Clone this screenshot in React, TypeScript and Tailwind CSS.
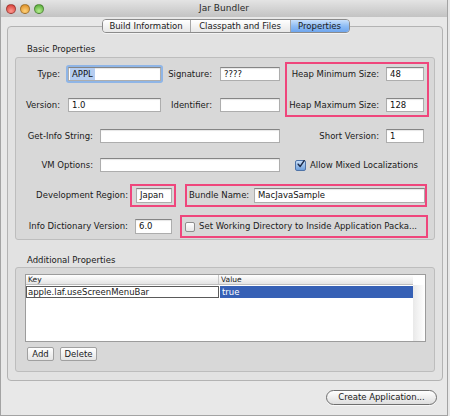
import { type ReactNode } from "react";

const fieldBase =
  "flex h-[14px] shrink-0 items-center border border-[#adadad] border-t-[#858585] bg-white pl-[3px] text-[8.5px] text-[#111] shadow-[inset_0_1px_1px_rgba(0,0,0,0.1)]";

function Field({ width, children }: { width: string; children?: ReactNode }) {
  return <div className={`${fieldBase} ${width}`}>{children}</div>;
}

function Label({ width, children }: { width: string; children: ReactNode }) {
  return <span className={`shrink-0 whitespace-nowrap text-right ${width}`}>{children}</span>;
}

function Light({ color }: { color: string }) {
  return <span className={`size-[10px] rounded-full border border-black/30 ${color}`} />;
}

function CheckBox({ checked }: { checked?: boolean }) {
  if (checked) {
    return (
      <span className="flex size-[11px] shrink-0 items-center justify-center rounded-[2px] border border-[#4f74a8] bg-linear-to-b from-[#c7ddf6] to-[#6fa0dc]">
        <svg width="10" height="10" viewBox="0 0 10 10" className="-mt-[2px] ml-[1px]">
          <path d="M1.5 5.2 L4 8 L9 0.8" fill="none" stroke="#1b2a47" strokeWidth="1.8" strokeLinecap="round" strokeLinejoin="round" />
        </svg>
      </span>
    );
  }
  return <span className="size-[10px] shrink-0 rounded-[2px] border border-[#8e8e8e] bg-linear-to-b from-white to-[#e6e6e6]" />;
}

function GroupTitle({ children, className }: { children: ReactNode; className: string }) {
  return <div className={`ml-[19px] h-[12px] leading-[12px] text-[8.5px] ${className}`}>{children}</div>;
}

function Tab({ label, width, active, last }: { label: string; width: string; active?: boolean; last?: boolean }) {
  return (
    <div
      className={`flex h-full items-center justify-center ${width} ${last ? "" : "border-r border-[#a5a5a5]"} ${
        active ? "bg-linear-to-b from-[#c9e0fb] via-[#8fbdf4] to-[#6fa6ee]" : "bg-linear-to-b from-white to-[#e7e7e7]"
      }`}
    >
      {label}
    </div>
  );
}

const pink = "border-2 border-[#ef467c]";

export default function App() {
  return (
    <div className="h-[416px] w-[450px] overflow-hidden bg-[#e8e8e8] font-['DejaVu_Sans',sans-serif] text-[8.5px] text-[#1a1a1a]">
      <div className="flex h-[416px] w-[448px] flex-col border-x border-b border-[#a3a3a3] bg-[#e8e8e8]">
        {/* Title bar */}
        <div className="flex h-[17px] items-center bg-linear-to-b from-[#e4e4e4] to-[#c3c3c3]">
          <div className="ml-[5px] flex w-[60px] gap-[4px]">
            <Light color="bg-[radial-gradient(circle_at_50%_75%,#ff9a90,#d2322b)]" />
            <Light color="bg-[radial-gradient(circle_at_50%_75%,#ffd27a,#d8861c)]" />
            <Light color="bg-[radial-gradient(circle_at_50%_75%,#b6ee8f,#4aa32d)]" />
          </div>
          <div className="flex-1 text-center text-[9px] text-[#2a2a2a]">Jar Bundler</div>
          <div className="mr-[5px] w-[60px]" />
        </div>

        {/* Tabs */}
        <div className="relative z-10 mt-[2px] -mb-[7px] flex justify-center pl-[3px]">
          <div className="flex h-[14px] overflow-hidden rounded-[4px] border border-[#8b8b8b] shadow-[0_1px_0_rgba(255,255,255,0.6)]">
            <Tab label="Build Information" width="w-[88px]" />
            <Tab label="Classpath and Files" width="w-[100px]" />
            <Tab label="Properties" width="w-[58px]" active last />
          </div>
        </div>

        {/* Tab panel */}
        <div className="ml-[6px] flex w-[436px] flex-col rounded-[4px] border border-[#b3b3b3] bg-[#e2e2e2] pb-[8px]">
          <GroupTitle className="mt-[16px] mb-[2px]">Basic Properties</GroupTitle>

          <div className="ml-[7px] flex w-[420px] flex-col rounded-[3px] border border-[#bdbdbd] bg-[#d8d8d8] pb-[1px]">
            {/* Type / Version + heap */}
            <div className="mt-[4px] flex items-start">
              <div className="flex w-[269px] flex-col gap-[17px] pt-[5px]">
                <div className="flex h-[14px] items-center">
                  <Label width="w-[44px]">Type:</Label>
                  <div className="ml-[8px] w-[93px] shrink-0 rounded-[1px] shadow-[0_0_0_2px_#8fb5e6]">
                    <Field width="w-[93px]">
                      <span className="-ml-[2px] bg-[#b5cdf1] px-[2px]">APPL</span>
                    </Field>
                  </div>
                  <Label width="w-[48px] ml-[3px]">Signature:</Label>
                  <div className="ml-[8px]">
                    <Field width="w-[60px]">????</Field>
                  </div>
                </div>
                <div className="flex h-[14px] items-center">
                  <Label width="w-[44px]">Version:</Label>
                  <div className="ml-[8px]">
                    <Field width="w-[93px]">1.0</Field>
                  </div>
                  <Label width="w-[48px] ml-[3px]">Identifier:</Label>
                  <div className="ml-[8px]">
                    <Field width="w-[60px]" />
                  </div>
                </div>
              </div>
              <div className={`${pink} flex w-[144px] flex-col gap-[17px] py-[3px]`}>
                <div className="flex h-[14px] items-center">
                  <Label width="w-[92px]">Heap Minimum Size:</Label>
                  <div className="ml-[7px]">
                    <Field width="w-[38px]">48</Field>
                  </div>
                </div>
                <div className="flex h-[14px] items-center">
                  <Label width="w-[92px]">Heap Maximum Size:</Label>
                  <div className="ml-[7px]">
                    <Field width="w-[38px]">128</Field>
                  </div>
                </div>
              </div>
            </div>

            {/* Get-Info */}
            <div className="mt-[12px] flex h-[14px] items-center">
              <Label width="w-[77px]">Get-Info String:</Label>
              <div className="ml-[7px]">
                <Field width="w-[180px]" />
              </div>
              <Label width="w-[99px]">Short Version:</Label>
              <div className="ml-[7px]">
                <Field width="w-[38px]">1</Field>
              </div>
            </div>

            {/* VM options */}
            <div className="mt-[15px] flex h-[14px] items-center">
              <Label width="w-[77px]">VM Options:</Label>
              <div className="ml-[7px]">
                <Field width="w-[180px]" />
              </div>
              <div className="ml-[15px] flex items-center gap-[4px]">
                <CheckBox checked />
                <span className="whitespace-nowrap">Allow Mixed Localizations</span>
              </div>
            </div>

            {/* Region / bundle name */}
            <div className="mt-[12px] flex h-[23px] items-center">
              <Label width="w-[112px]">Development Region:</Label>
              <div className={`${pink} ml-[2px] flex h-[23px] w-[46px] items-center pl-[4px]`}>
                <Field width="w-[36px] h-[15px]">Japan</Field>
              </div>
              <div className={`${pink} ml-[9px] flex h-[23px] w-[242px] items-center`}>
                <Label width="w-[60px] text-left ml-[2px]">Bundle Name:</Label>
                <div className="ml-[5px]">
                  <Field width="w-[171px] h-[15px]">MacJavaSample</Field>
                </div>
              </div>
            </div>

            {/* Info dictionary */}
            <div className="mt-[8px] flex h-[23px] items-center">
              <Label width="w-[112px]">Info Dictionary Version:</Label>
              <div className="ml-[7px]">
                <Field width="w-[37px] h-[15px]">6.0</Field>
              </div>
              <div className={`${pink} ml-[8px] flex h-[23px] w-[248px] items-center`}>
                <div className="ml-[3px] flex items-center gap-[4px]">
                  <CheckBox />
                  <span className="whitespace-nowrap">Set Working Directory to Inside Application Packa...</span>
                </div>
              </div>
            </div>
          </div>

          <GroupTitle className="mt-[14px] mb-[1px]">Additional Properties</GroupTitle>

          <div className="ml-[7px] flex w-[420px] flex-col rounded-[3px] border border-[#bdbdbd] bg-[#d8d8d8] pb-[10px]">
            {/* Table */}
            <div className="mt-[6px] ml-[9px] flex h-[68px] w-[401px] border border-[#9c9c9c] bg-white">
              <div className="flex w-[387px] flex-col">
                <div className="flex h-[10px] border-b border-[#bfbfbf] bg-linear-to-b from-white to-[#e4e4e4] text-[7.5px] leading-[9px]">
                  <div className="w-[193px] border-r border-[#c6c6c6] pl-[2px]">Key</div>
                  <div className="flex-1 pl-[2px]">Value</div>
                </div>
                <div className="mt-[1px] flex h-[12px]">
                  <div className="flex w-[193px] items-center border border-[#5a5a5a] pl-[1px] text-[8.5px]">
                    apple.laf.useScreenMenuBar
                  </div>
                  <div className="ml-[1px] flex flex-1 items-center bg-[#3660b5] pl-[2px] text-white">true</div>
                </div>
              </div>
              <div className="flex w-[12px] flex-col">
                <div className="h-[10px] bg-white" />
                <div className="flex-1 bg-linear-to-r from-[#e9e9e9] via-[#f4f4f4] to-white" />
              </div>
            </div>

            {/* Add / Delete */}
            <div className="mt-[5px] ml-[11px] flex gap-[6px]">
              <button className="flex h-[14px] w-[27px] items-center justify-center rounded-[2px] border border-[#a0a0a0] bg-linear-to-b from-white to-[#e4e4e4]">
                Add
              </button>
              <button className="flex h-[14px] w-[37px] items-center justify-center rounded-[2px] border border-[#a0a0a0] bg-linear-to-b from-white to-[#e4e4e4]">
                Delete
              </button>
            </div>
          </div>
        </div>

        {/* Bottom action */}
        <div className="mt-[9px] flex justify-end pr-[10px]">
          <button className="flex h-[15px] w-[111px] items-center justify-center rounded-full border border-[#6f6f6f] bg-linear-to-b from-white to-[#dedede] shadow-[0_1px_0_rgba(255,255,255,0.7)]">
            Create Application...
          </button>
        </div>
      </div>
    </div>
  );
}
